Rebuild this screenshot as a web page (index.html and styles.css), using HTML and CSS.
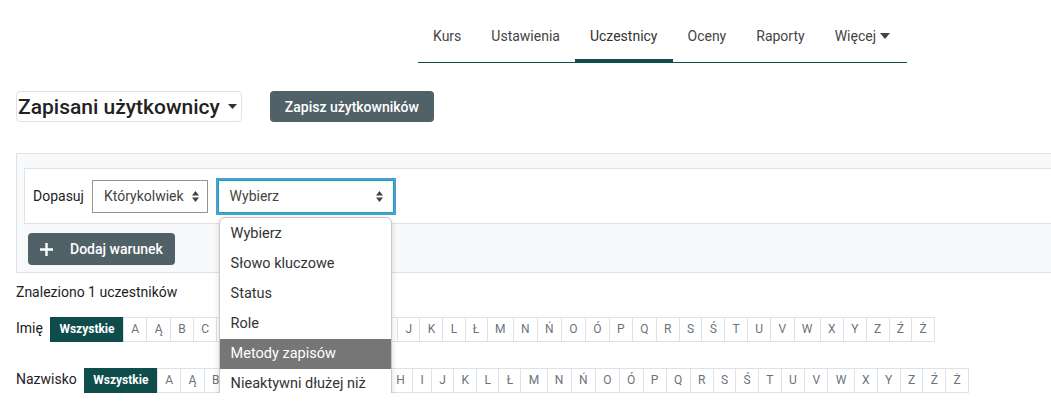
FILE: index.html
```html
<!DOCTYPE html>
<html lang="pl">
<head>
  <meta charset="UTF-8">
  <title>Uczestnicy</title>
  <link rel="stylesheet" href="styles.css">
</head>
<body>

  <nav class="course-nav">
    <a href="#">Kurs</a>
    <a href="#">Ustawienia</a>
    <a href="#" class="active">Uczestnicy</a>
    <a href="#">Oceny</a>
    <a href="#">Raporty</a>
    <a href="#">Więcej <svg class="caret" width="10" height="6" viewBox="0 0 10 6"><path d="M0 0h10L5 6z" fill="#444"/></svg></a>
  </nav>

  <main>
    <div class="page-head">
      <div class="page-select">Zapisani użytkownicy <svg width="9" height="5" viewBox="0 0 9 5"><path d="M0 0h9L4.5 5z" fill="#333"/></svg></div>
      <button class="btn">Zapisz użytkowników</button>
    </div>

    <div class="filter-panel">
      <div class="filter-row">
        <span class="filter-label">Dopasuj</span>
        <div class="select">Którykolwiek
          <svg width="7" height="11" viewBox="0 0 7 11"><path d="M0 4.5h7L3.5 0zM0 6.5h7L3.5 11z" fill="#444"/></svg>
        </div>
        <div class="select focused">Wybierz
          <svg width="7" height="11" viewBox="0 0 7 11"><path d="M0 4.5h7L3.5 0zM0 6.5h7L3.5 11z" fill="#444"/></svg>
          <ul class="dropdown">
            <li>Wybierz</li>
            <li>Słowo kluczowe</li>
            <li>Status</li>
            <li>Role</li>
            <li class="hover">Metody zapisów</li>
            <li>Nieaktywni dłużej niż</li>
          </ul>
        </div>
      </div>
      <button class="btn add-btn"><svg width="13" height="13" viewBox="0 0 13 13"><path d="M5.3 0h2.4v5.3H13v2.4H7.7V13H5.3V7.7H0V5.3h5.3z" fill="#fff"/></svg> Dodaj warunek</button>
    </div>

    <p class="found">Znaleziono 1 uczestników</p>

    <div class="initials">
      <span class="initials-label">Imię</span>
      <div class="letters" id="firstLetters"></div>
    </div>
    <div class="initials">
      <span class="initials-label">Nazwisko</span>
      <div class="letters" id="lastLetters"></div>
    </div>
  </main>

  <script>
    const alphabet = "A Ą B C Ć D E Ę F G H I J K L Ł M N Ń O Ó P Q R S Ś T U V W X Y Z Ź Ż".split(" ");
    ["firstLetters", "lastLetters"].forEach(function(id) {
      const box = document.getElementById(id);
      let html = '<span class="letter all">Wszystkie</span>';
      alphabet.forEach(function(l) {
        html += '<span class="letter">' + l + '</span>';
      });
      box.innerHTML = html;
    });
  </script>
</body>
</html>
```

FILE: styles.css
```css
html {
  overflow: hidden;
}

body {
  font-family: Roboto, 'Liberation Sans', sans-serif;
  color: #1d2125;
  background-color: #fff;
  margin: 0;
  padding: 0;
  font-size: 14px;
}

.course-nav {
  display: flex;
  width: 489px;
  margin: 16px 0 0 418px;
  border-bottom: 1px solid #0f4c4c;
}

.course-nav a {
  padding: 10px 15px 16px;
  line-height: 20px;
  font-size: 14px;
  color: #444;
  text-decoration: none;
  white-space: nowrap;
}

.course-nav a.active {
  box-shadow: inset 0 -3px 0 #0f4c4c;
  color: #333;
}

.course-nav .caret {
  margin-left: 1px;
  vertical-align: 2px;
}

main {
  padding-left: 16px;
}

.page-head {
  display: flex;
  align-items: center;
  gap: 28px;
  margin-top: 28px;
}

.page-select {
  height: 29px;
  border: 1px solid #dee2e6;
  border-radius: 4px;
  padding: 0 4px 0 1px;
  display: flex;
  align-items: center;
  gap: 8px;
  font-size: 21px;
  font-weight: 500;
  color: #222;
}

.btn {
  font-family: inherit;
  height: 31px;
  padding: 0 15px;
  font-size: 14px;
  font-weight: 500;
  color: #fff;
  background-color: #506168;
  border: none;
  border-radius: 4px;
}

.filter-panel {
  margin-top: 31px;
  width: 1100px;
  background-color: #f8f9fa;
  border: 1px solid #dee2e6;
  padding: 14px 0 7px 7px;
}

.filter-row {
  display: flex;
  align-items: center;
  gap: 8px;
  height: 54px;
  background-color: #fff;
  border: 1px solid #dee2e6;
  padding-left: 8px;
}

.filter-label {
  font-size: 14px;
}

.select {
  position: relative;
  height: 31px;
  border: 1px solid #8f959e;
  display: flex;
  align-items: center;
  justify-content: space-between;
  padding: 0 8px 0 11px;
  font-size: 14px;
  color: #444;
}

.select svg {
  margin-left: 8px;
}

.select.focused {
  width: 153px;
  border-color: #19a5b5;
  box-shadow: 0 0 0 2px #4d9dd6;
  margin-left: 2px;
  padding-right: 10px;
}

.dropdown {
  position: absolute;
  left: 0;
  top: 36px;
  width: 171px;
  margin: 0;
  padding: 1px 0;
  list-style: none;
  background-color: #fff;
  border: 1px solid #c8c8c8;
  border-radius: 6px;
  box-shadow: 0 2px 6px rgba(0,0,0,0.15);
  z-index: 5;
}

.dropdown li {
  height: 30px;
  line-height: 30px;
  padding-left: 11px;
  font-size: 14.5px;
  color: #333;
}

.dropdown li.hover {
  background-color: #767676;
  color: #fff;
}

.add-btn {
  display: flex;
  align-items: center;
  gap: 17px;
  margin: 9px 0 0 4px;
  height: 32px;
  padding: 0 12px;
}

.found {
  margin: 11px 0 0;
  font-size: 14px;
}

.initials {
  display: flex;
  align-items: center;
  gap: 7px;
  margin-top: 17px;
}

.initials + .initials {
  margin-top: 26px;
}

.initials-label {
  font-size: 14px;
  margin-top: -4px;
}

.letters {
  display: flex;
}

.letter {
  height: 23px;
  line-height: 23px;
  padding: 0 7.3px;
  font-size: 12px;
  color: #6a737b;
  border: 1px solid #dee2e6;
  margin-left: -1px;
}

.letter.all {
  margin-left: 0;
  padding: 0 8.5px;
  background-color: #0f4c4c;
  border-color: #0f4c4c;
  color: #fff;
  font-weight: bold;
  font-size: 12px;
}
```
